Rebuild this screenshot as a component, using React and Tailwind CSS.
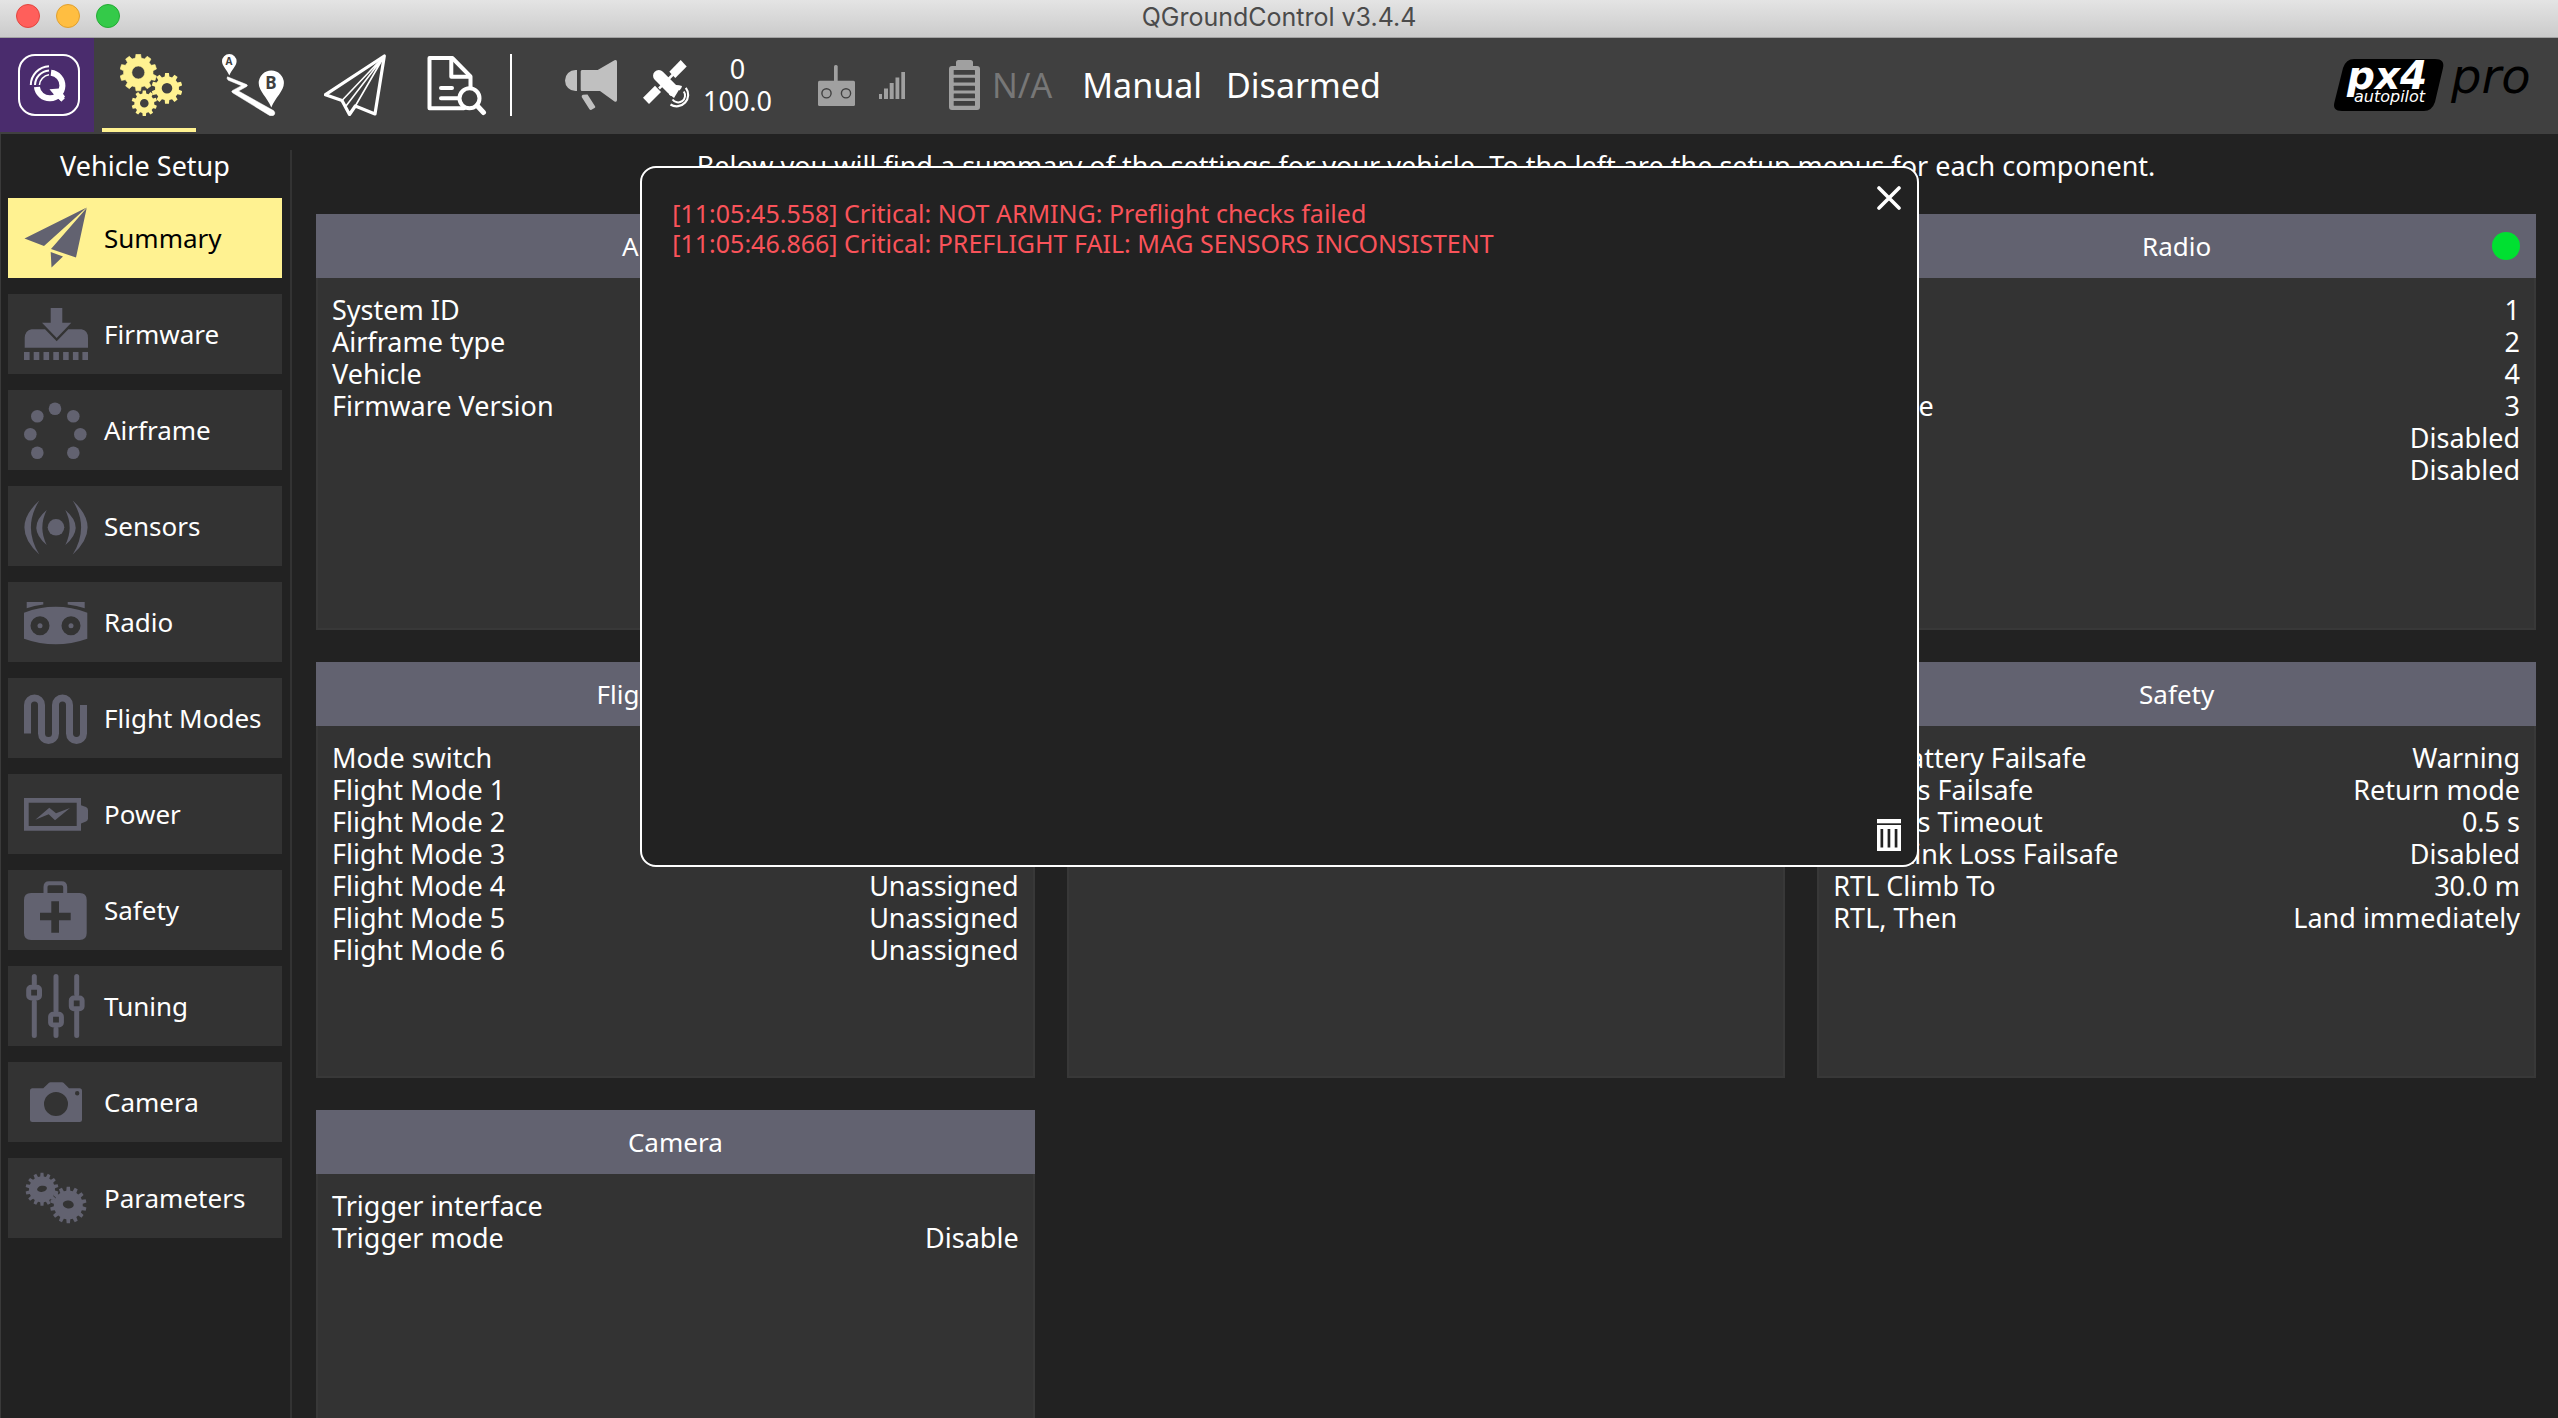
import React, { useState } from "react";

// Outline of a cog wheel centred on cx, cy
const gearPath = (cx, cy, outer, inner, teeth) => {
  const step = (Math.PI * 2) / teeth;
  const point = (radius, angle) =>
    `${(cx + radius * Math.sin(angle)).toFixed(2)} ${(cy - radius * Math.cos(angle)).toFixed(2)}`;
  let d = "";
  for (let i = 0; i < teeth; i++) {
    const a = i * step;
    d += `${i === 0 ? "M" : "L"}${point(inner, a - step * 0.31)}`;
    d += `L${point(outer, a - step * 0.2)}L${point(outer, a + step * 0.2)}`;
    d += `L${point(inner, a + step * 0.31)}`;
  }
  return d + "Z";
};

const circlePath = (cx, cy, r) =>
  `M${cx - r} ${cy}a${r} ${r} 0 1 0 ${r * 2} 0a${r} ${r} 0 1 0 ${-r * 2} 0Z`;

/* ---------- Toolbar icons ---------- */

const QgcIcon = () => (
  <svg viewBox="0 0 62 62" className="size-[62px]" fill="none" stroke="#fff">
    <rect x="1" y="1" width="60" height="60" rx="16" strokeWidth="2" />
    <path d="M33 18.8A12.8 12.8 0 1 1 18.9 33" strokeWidth="6" />
    <path d="M31 12.2A19 19 0 0 0 12.8 31" strokeWidth="2" />
    <path d="M31 16.4A15 15 0 0 0 17 31" strokeWidth="2" />
    <path d="M31 20.8A11 11 0 0 0 21.4 31" strokeWidth="1.6" />
    <path d="M31.5 35.2L41 34.5L47 42.5L43.5 47.5L37.5 42.5Z" fill="#fff" stroke="none" />
    <path d="M39 38.5L45 46" strokeWidth="4.5" />
  </svg>
);

const SetupIcon = () => (
  <svg viewBox="0 0 62 62" className="size-[62px]" fill="#fff291" fillRule="evenodd">
    <path
      d={gearPath(18.3, 18.5, 18.5, 14.8, 10) + circlePath(18.3, 18.5, 6.5)}
      stroke="#fff291"
      strokeWidth="0.6"
      strokeLinejoin="round"
    />
    <path d={gearPath(47, 34.3, 15.5, 12, 10) + circlePath(47, 34.3, 5.3)} />
    <path d={gearPath(24.3, 49.3, 12.8, 10, 10) + circlePath(24.3, 49.3, 4.3)} />
  </svg>
);

const PlanIcon = () => (
  <svg viewBox="0 0 62 62" className="size-[62px]" fill="#fff">
    <path d="M7.3 0A7.3 7.3 0 0 1 14.6 7.3C14.6 12 9.6 16 7.3 21.5C5 16 0 12 0 7.3A7.3 7.3 0 0 1 7.3 0Z" />
    <path d="M49.3 16.5A12.6 12.6 0 0 1 61.9 29.1C61.9 37 53.5 43.5 49.3 53.5C45.1 43.5 36.7 37 36.7 29.1A12.6 12.6 0 0 1 49.3 16.5Z" />
    <path
      d="M5.5 22.8L24.8 30.6Q26 31.5 24.8 32.4L16.5 37L51.5 56.6Q54 59 52 61Q50.5 62.5 47.5 61.4L10.5 38.7Q9 37.6 10.6 36.4L19.5 31.7L6.2 26.2Q4.3 24.5 5.5 22.8Z"
      stroke="#fff"
      strokeWidth="0.5"
    />
    <text x="7" y="11" textAnchor="middle" className="fill-[#404040] font-['Noto_Sans',sans-serif] text-[10px] font-bold">
      A
    </text>
    <text x="49" y="35" textAnchor="middle" className="fill-[#404040] font-['Noto_Sans',sans-serif] text-[17px] font-bold">
      B
    </text>
  </svg>
);

const FlyIcon = () => (
  <svg viewBox="0 0 62 62" className="size-[62px]" fill="none" stroke="#fff" strokeLinejoin="round">
    <path d="M1.5 40.7L60.3 2L51 60L31.3 52L25.5 60.5L18 46.5Z" strokeWidth="3.2" />
    <path d="M60.3 2L18 46.5M60.3 2L22 52M60.3 2L31.3 52" strokeWidth="1.6" />
  </svg>
);

const AnalyzeIcon = () => (
  <svg viewBox="0 0 62 62" className="size-[62px]" fill="none" stroke="#fff" strokeWidth="4" strokeLinecap="round" strokeLinejoin="round">
    <path d="M38 54.3H3.5V4H26.3L44.5 22.5V34" />
    <path d="M25.3 4V22.8H44" />
    <path d="M15 34H26M15 44.3H33" />
    <circle cx="43.5" cy="44.3" r="10" />
    <path d="M51 51.5L57.5 58.5" strokeWidth="5" />
  </svg>
);

const MegaphoneIcon = () => (
  <svg viewBox="0 0 52 50" className="h-[50px] w-[52px]" fill="#c0c0c0">
    <path d="M12 10V31H10.5A10.5 10.5 0 0 1 10.5 10Z" />
    <path d="M17 10H32.7L49.5 0.3Q52 -0.6 52 1.8V40Q52 42.4 49.5 41.5L35 31H17Q15.7 31 15.7 29.5V11.5Q15.7 10 17 10Z" />
    <path d="M18 34.8L22.5 34.5L30.2 46.5Q30.5 47.6 29.5 48.1L26 50Q24.8 50 24.3 49L16.7 37Q16.4 35.3 18 34.8Z" />
  </svg>
);

const SatelliteIcon = () => (
  <svg viewBox="0 0 48 50" className="h-[50px] w-12" fill="#fff">
    <path d="M37.7 0L43.7 6.5L32.3 18L26.3 11.7Z" />
    <path d="M12 25.8L18 32L6 44L0 37.8Z" />
    <path d="M16 28.5L30 14.5" stroke="#fff" strokeWidth="2.5" />
    <path d="M15.8 15.8L29 29" stroke="#fff" strokeWidth="11.5" strokeLinecap="round" />
    <path d="M29.5 25.5Q34 24.5 39 26Q39 27.5 36.5 30.5A4 4 0 0 0 30 36Q27.5 36.5 26 34.5Q25.5 30 29.5 25.5Z" />
    <path d="M25.5 33.5L38 26.5L31 38Z" />
    <path d="M40.8 31.5A6.5 6.5 0 0 1 29.5 39.5" fill="none" stroke="#fff" strokeWidth="2" />
    <path d="M42.8 27.8A11.5 11.5 0 0 1 27.5 44.5" fill="none" stroke="#fff" strokeWidth="2.2" />
  </svg>
);

const RcIcon = () => (
  <svg viewBox="0 0 37 41" className="h-[41px] w-[37px]" fill="#a0a0a0">
    <rect x="16" y="0" width="3.7" height="17" rx="1.5" />
    <rect x="0" y="15.7" width="37" height="25.3" rx="1.5" />
    <circle cx="8.5" cy="28.3" r="4.6" stroke="#404040" strokeWidth="1.4" />
    <circle cx="28" cy="28.3" r="4.6" stroke="#404040" strokeWidth="1.4" />
  </svg>
);

const SignalIcon = () => (
  <svg viewBox="0 0 26 27" className="h-[27px] w-[26px]" fill="#a0a0a0">
    <rect x="0" y="22" width="3" height="5" />
    <rect x="5" y="16.5" width="4" height="10.5" />
    <rect x="10.7" y="11" width="4" height="16" />
    <rect x="16.5" y="5.5" width="3.8" height="21.5" />
    <rect x="22.3" y="0" width="3.7" height="27" />
  </svg>
);

const BatteryIcon = () => (
  <svg viewBox="0 0 31 50" className="h-[50px] w-[31px]" fill="#a0a0a0">
    <path d="M9.5 0H21.5Q24 0 24 2.5V6H28Q31 6 31 9V47Q31 50 28 50H3Q0 50 0 47V9Q0 6 3 6H7V2.5Q7 0 9.5 0Z" />
    {[10, 17.8, 25.7, 33.5, 41].map((y) => (
      <rect key={y} x="4.7" y={y} width="21.3" height="4.8" rx="0.5" fill="#404040" />
    ))}
  </svg>
);

const Px4Logo = () => (
  <svg viewBox="0 0 198 52" className="h-[52px] w-[198px] overflow-visible">
    <path d="M20 0H101Q111 0 109 9L101 43Q98 52 90 52H8Q-2 52 0.5 43L9 9Q12 0 20 0Z" />
    <text x="13" y="30" className="fill-white font-['DejaVu_Sans',sans-serif] text-[39px] font-bold italic">
      px4
    </text>
    <text x="20" y="43" className="fill-white font-['DejaVu_Sans',sans-serif] text-[16px] italic">
      autopilot
    </text>
    <text x="117" y="34" className="fill-black font-['DejaVu_Sans',sans-serif] text-[48px] italic">
      pro
    </text>
  </svg>
);

/* ---------- Sidebar icons ---------- */

const SideIcon = ({ children }) => (
  <svg viewBox="0 0 64 64" className="size-16 shrink-0" fill="#626270" fillRule="evenodd">
    {children}
  </svg>
);

const menu = [
  {
    name: "Summary",
    icon: <path d="M0.5 32.5L62.7 1.5L20 40ZM62.7 2L52 51.5L27 43ZM26.7 46L39 50.5L27.5 61.5Z" />,
  },
  {
    name: "Firmware",
    icon: (
      <>
        <path d="M26.7 6H38.3V20.7H47.3L32.7 36L18 20.7H26.7Z" />
        <path d="M7.5 27.3H21L32.7 39.3L44.3 27.3H57.5Q64 28.5 64 36V45.7H0.7V36Q1 28.5 7.5 27.3Z" />
        <path d="M0 50h5.6v8H0ZM9.7 50h5.6v8h-5.6ZM19.5 50h5.6v8h-5.6ZM29.3 50h5.6v8h-5.6ZM39.1 50h5.6v8h-5.6ZM48.9 50h5.6v8h-5.6ZM58.4 50h5.6v8h-5.6Z" />
      </>
    ),
  },
  {
    name: "Airframe",
    icon: (
      <>
        <circle cx="31" cy="10.7" r="6.3" />
        <circle cx="13.3" cy="18.3" r="6.3" />
        <circle cx="49.3" cy="18.3" r="6.3" />
        <circle cx="6.3" cy="36.3" r="6.3" />
        <circle cx="56.3" cy="36.3" r="6.3" />
        <circle cx="13.3" cy="54.7" r="6.3" />
        <circle cx="49.3" cy="54.7" r="6.3" />
      </>
    ),
  },
  {
    name: "Sensors",
    icon: (
      <>
        <circle cx="32" cy="33.3" r="8.3" />
        <path d="M22.7 16Q2 33.5 22.7 51Q14 33.5 22.7 16Z" />
        <path d="M41.3 16Q62 33.5 41.3 51Q50 33.5 41.3 16Z" />
        <path d="M15.3 6.5Q-14.5 33.5 15.3 60.5Q-1.5 33.5 15.3 6.5Z" />
        <path d="M48.7 6.5Q78.5 33.5 48.7 60.5Q65.5 33.5 48.7 6.5Z" />
      </>
    ),
  },
  {
    name: "Radio",
    icon: (
      <>
        <path
          d={
            "M0 22.7Q31.5 11 63.3 22.7V48.7Q31.5 60 0 48.7Z" +
            circlePath(16, 35.7, 9.5) +
            circlePath(47, 35.7, 9.5)
          }
        />
        <circle cx="16" cy="35.7" r="2.5" />
        <circle cx="47" cy="35.7" r="2.5" />
        <path d="M2.7 12H19.3V14.5Q10 15.5 2.7 18.3ZM60.7 12H43.7V14.5Q53 15.5 60.7 18.3Z" />
      </>
    ),
  },
  {
    name: "Flight Modes",
    icon: (
      <path
        d="M3.5 47.5V19a7 7 0 0 1 14 0V47.5a7 7 0 0 0 14 0V19a7 7 0 0 1 14 0V47.5a7 7 0 0 0 14 0V19"
        fill="none"
        stroke="#626270"
        strokeWidth="7"
      />
    ),
  },
  {
    name: "Power",
    icon: (
      <>
        <path d="M0 16H57V48.7H0ZM4.7 20.7V44H52.7V20.7Z" />
        <path d="M57 23.3L62 25Q64 26 64 28V36.5Q64 38.5 62 39.5L57 41.5Z" />
        <path d="M11.3 37.7L25.3 25.7L32 31.3L46 26L31 38.3L24.7 32.3Z" />
      </>
    ),
  },
  {
    name: "Safety",
    icon: (
      <>
        <path d="M7 15H55.7Q62.7 15 62.7 22V55Q62.7 62 55.7 62H7Q0 62 0 55V22Q0 15 7 15ZM27.3 23.3V34.7H16V42.3H27.3V54.7H35V42.3H46.7V34.7H35V23.3Z" />
        <path d="M21.5 16V9Q21.5 5.3 25 5.3H37.5Q41.2 5.3 41.2 9V16" fill="none" stroke="#626270" strokeWidth="4" />
      </>
    ),
  },
  {
    name: "Tuning",
    icon: (
      <>
        <path
          d="M10.3 2.5V10M10.3 28V61.5M32 2.5V37M32 55V61.5M52.7 2.5V20M52.7 38V61.5"
          stroke="#626270"
          strokeWidth="5"
          strokeLinecap="round"
        />
        <g fill="none" stroke="#626270" strokeWidth="5">
          <rect x="4.7" y="13.2" width="10.8" height="10.8" rx="2.5" />
          <rect x="26.6" y="40.2" width="10.8" height="10.8" rx="2.5" />
          <rect x="47.3" y="24" width="10.8" height="10.8" rx="2.5" />
        </g>
      </>
    ),
  },
  {
    name: "Camera",
    icon: (
      <path
        d={
          "M8.5 18.3H19.3L25 12.8Q25.5 12.3 26.5 12.3H38Q39 12.3 39.5 12.8L45 18.3H55.5Q58 18.3 58 20.8V49.5Q58 52 55.5 52H8.5Q6 52 6 49.5V20.8Q6 18.3 8.5 18.3Z" +
          circlePath(32, 34, 12) +
          circlePath(53.2, 23.3, 2.2)
        }
      />
    ),
  },
  {
    name: "Parameters",
    icon: (
      <>
        <path d={gearPath(18, 23.3, 16.5, 13, 14)} />
        <path d={gearPath(44.3, 39, 18.3, 14.5, 14)} />
        <ellipse cx="18" cy="22.8" rx="5" ry="3" fill="#333" transform="rotate(-12 18 22.8)" />
        <ellipse cx="44.3" cy="38.5" rx="5.5" ry="4" fill="#333" transform="rotate(8 44.3 38.5)" />
      </>
    ),
  },
];

const cards = [
  {
    title: "Airframe",
    rows: [
      ["System ID", ""],
      ["Airframe type", ""],
      ["Vehicle", ""],
      ["Firmware Version", ""],
    ],
  },
  { title: "Sensors", rows: [] },
  {
    title: "Radio",
    ready: true,
    rows: [
      ["Roll", "1"],
      ["Pitch", "2"],
      ["Yaw", "4"],
      ["Throttle", "3"],
      ["Flaps", "Disabled"],
      ["Aux1", "Disabled"],
    ],
  },
  {
    title: "Flight Modes",
    rows: [
      ["Mode switch", ""],
      ["Flight Mode 1", ""],
      ["Flight Mode 2", ""],
      ["Flight Mode 3", ""],
      ["Flight Mode 4", "Unassigned"],
      ["Flight Mode 5", "Unassigned"],
      ["Flight Mode 6", "Unassigned"],
    ],
  },
  { title: "Power", rows: [] },
  {
    title: "Safety",
    rows: [
      ["Low Battery Failsafe", "Warning"],
      ["RC Loss Failsafe", "Return mode"],
      ["RC Loss Timeout", "0.5 s"],
      ["Data Link Loss Failsafe", "Disabled"],
      ["RTL Climb To", "30.0 m"],
      ["RTL, Then", "Land immediately"],
    ],
  },
  {
    title: "Camera",
    rows: [
      ["Trigger interface", ""],
      ["Trigger mode", "Disable"],
    ],
  },
];

const tools = [
  { name: "Application settings", icon: <QgcIcon />, style: "bg-[#4a2c6d]" },
  { name: "Vehicle setup", icon: <SetupIcon />, style: "border-b-4 border-[#fff291] pt-1" },
  { name: "Plan", icon: <PlanIcon />, style: "" },
  { name: "Fly", icon: <FlyIcon />, style: "" },
  { name: "Analyze", icon: <AnalyzeIcon />, style: "" },
];

const TitleBar = () => (
  <header className="relative flex h-[38px] shrink-0 items-center justify-center border-b border-[#a2a2a2] bg-gradient-to-b from-[#e4e4e4] to-[#cbcbcb] pb-1">
    <div className="absolute top-1 left-4 flex gap-4">
      <button aria-label="Close window" className="size-6 rounded-full border border-[#e2463f] bg-[#ff5f5b]" />
      <button aria-label="Minimize window" className="size-6 rounded-full border border-[#e0a030] bg-[#ffbe41]" />
      <button aria-label="Zoom window" className="size-6 rounded-full border border-[#24ab34] bg-[#34ca49]" />
    </div>
    <h1 className="font-['Inter',sans-serif] text-[25px] leading-8 text-[#4b4b4b]">QGroundControl v3.4.4</h1>
  </header>
);

const Toolbar = ({ onMessages }) => (
  <div className="flex h-24 shrink-0 items-start justify-between bg-[#404040] pr-[26px]">
    <div className="flex h-[94px] items-center">
      <nav className="flex gap-2">
        {tools.map((tool) => (
          <button
            key={tool.name}
            aria-label={tool.name}
            className={`flex h-[94px] w-[94px] items-center justify-center pl-1 ${tool.style}`}
          >
            {tool.icon}
          </button>
        ))}
      </nav>
      <div className="ml-2 h-[62px] w-0.5 bg-white" />
      <div className="ml-[53px] flex items-center gap-[26px] text-[34px] text-white">
        <button aria-label="Vehicle messages" onClick={onMessages}>
          <MegaphoneIcon />
        </button>
        <div className="mr-5 flex items-center gap-3">
          <SatelliteIcon />
          <div className="text-center text-[27px] leading-8">
            <p>0</p>
            <p>100.0</p>
          </div>
        </div>
        <div className="mr-[18px] flex items-center gap-6">
          <RcIcon />
          <SignalIcon />
        </div>
        <div className="mr-1 flex items-center gap-3">
          <BatteryIcon />
          <span className="text-[#777]">N/A</span>
        </div>
        <div className="flex gap-6">
          <span>Manual</span>
          <span>Disarmed</span>
        </div>
      </div>
    </div>
    <div className="flex h-[94px] items-center">
      <Px4Logo />
    </div>
  </div>
);

const Sidebar = ({ selected, onSelect }) => (
  <aside className="w-[291px] shrink-0 border-r-2 border-[#333] pr-2 pl-[7px] text-white">
    <h2 className="text-center text-[27px] leading-8">Vehicle Setup</h2>
    <nav className="mt-4 flex flex-col gap-4">
      {menu.map((item) => (
        <button
          key={item.name}
          onClick={() => onSelect(item.name)}
          className={`flex h-20 items-center gap-4 pl-4 whitespace-nowrap ${
            selected === item.name ? "bg-[#fff291] text-black" : "bg-[#333] text-white"
          }`}
        >
          <SideIcon>{item.icon}</SideIcon>
          {item.name}
        </button>
      ))}
    </nav>
  </aside>
);

const SummaryCard = ({ card }) => (
  <section>
    <div className="relative flex h-16 items-center justify-center bg-[#626270]">
      <h3 className="text-[26px]">{card.title}</h3>
      {card.ready && <span className="absolute right-4 size-7 rounded-full bg-[#00e031]" />}
    </div>
    <dl className="h-[352px] border-2 border-t-0 border-[#383838] bg-[#333] px-3.5 pt-4 leading-8">
      {card.rows.map(([label, value]) => (
        <div key={label} className="flex justify-between">
          <dt>{label}</dt>
          <dd>{value}</dd>
        </div>
      ))}
    </dl>
  </section>
);

const MessagePopup = ({ messages, onClose, onClear }) => (
  <div
    role="dialog"
    aria-label="Vehicle messages"
    className="absolute top-8 left-1/4 h-[701px] w-1/2 rounded-2xl border-2 border-white bg-[#222] p-[30px]"
  >
    <div className="text-[25px] leading-[30px] text-[#fa535a]">
      {messages.map((message) => (
        <p key={message}>{message}</p>
      ))}
    </div>
    <button aria-label="Close" onClick={onClose} className="absolute top-[18px] right-4">
      <svg viewBox="0 0 24 24" className="size-6" stroke="#fff" strokeWidth="3.6" strokeLinecap="round">
        <path d="M2 2L22 22M22 2L2 22" />
      </svg>
    </button>
    <button aria-label="Clear messages" onClick={onClear} className="absolute right-4 bottom-[14px]">
      <svg viewBox="0 0 24 32" className="h-8 w-6" fill="#fff" fillRule="evenodd">
        <path d="M0 0H24V4.3H0Z" />
        <path d="M0 6H24V32H0ZM3.5 10V28.5H6.2V10ZM10.6 10V28.5H13.3V10ZM17.7 10V28.5H20.4V10Z" />
      </svg>
    </button>
  </div>
);

export default function App() {
  const [selected, setSelected] = useState("Summary");
  const [isPopupOpen, setIsPopupOpen] = useState(true);
  const [messages, setMessages] = useState([
    "[11:05:45.558] Critical: NOT ARMING: Preflight checks failed",
    "[11:05:46.866] Critical: PREFLIGHT FAIL: MAG SENSORS INCONSISTENT",
  ]);

  return (
    <div className="flex h-screen flex-col overflow-hidden bg-[#222] font-['Noto_Sans',sans-serif] text-[26px]">
      <TitleBar />
      <Toolbar onMessages={() => setIsPopupOpen(!isPopupOpen)} />

      <div className="relative flex min-h-0 flex-1 border-l border-[#3a3a3a] pt-4">
        <Sidebar selected={selected} onSelect={setSelected} />

        <main className="min-w-0 flex-1 pr-[22px] pl-6 text-[27px] text-white">
          <p className="text-center leading-8">
            Below you will find a summary of the settings for your vehicle. To the left are the
            setup menus for each component.
          </p>
          <div className="mt-8 grid grid-cols-3 gap-8">
            {cards.map((card) => (
              <SummaryCard key={card.title} card={card} />
            ))}
          </div>
        </main>

        {isPopupOpen && (
          <MessagePopup
            messages={messages}
            onClose={() => setIsPopupOpen(false)}
            onClear={() => setMessages([])}
          />
        )}
      </div>
    </div>
  );
}
